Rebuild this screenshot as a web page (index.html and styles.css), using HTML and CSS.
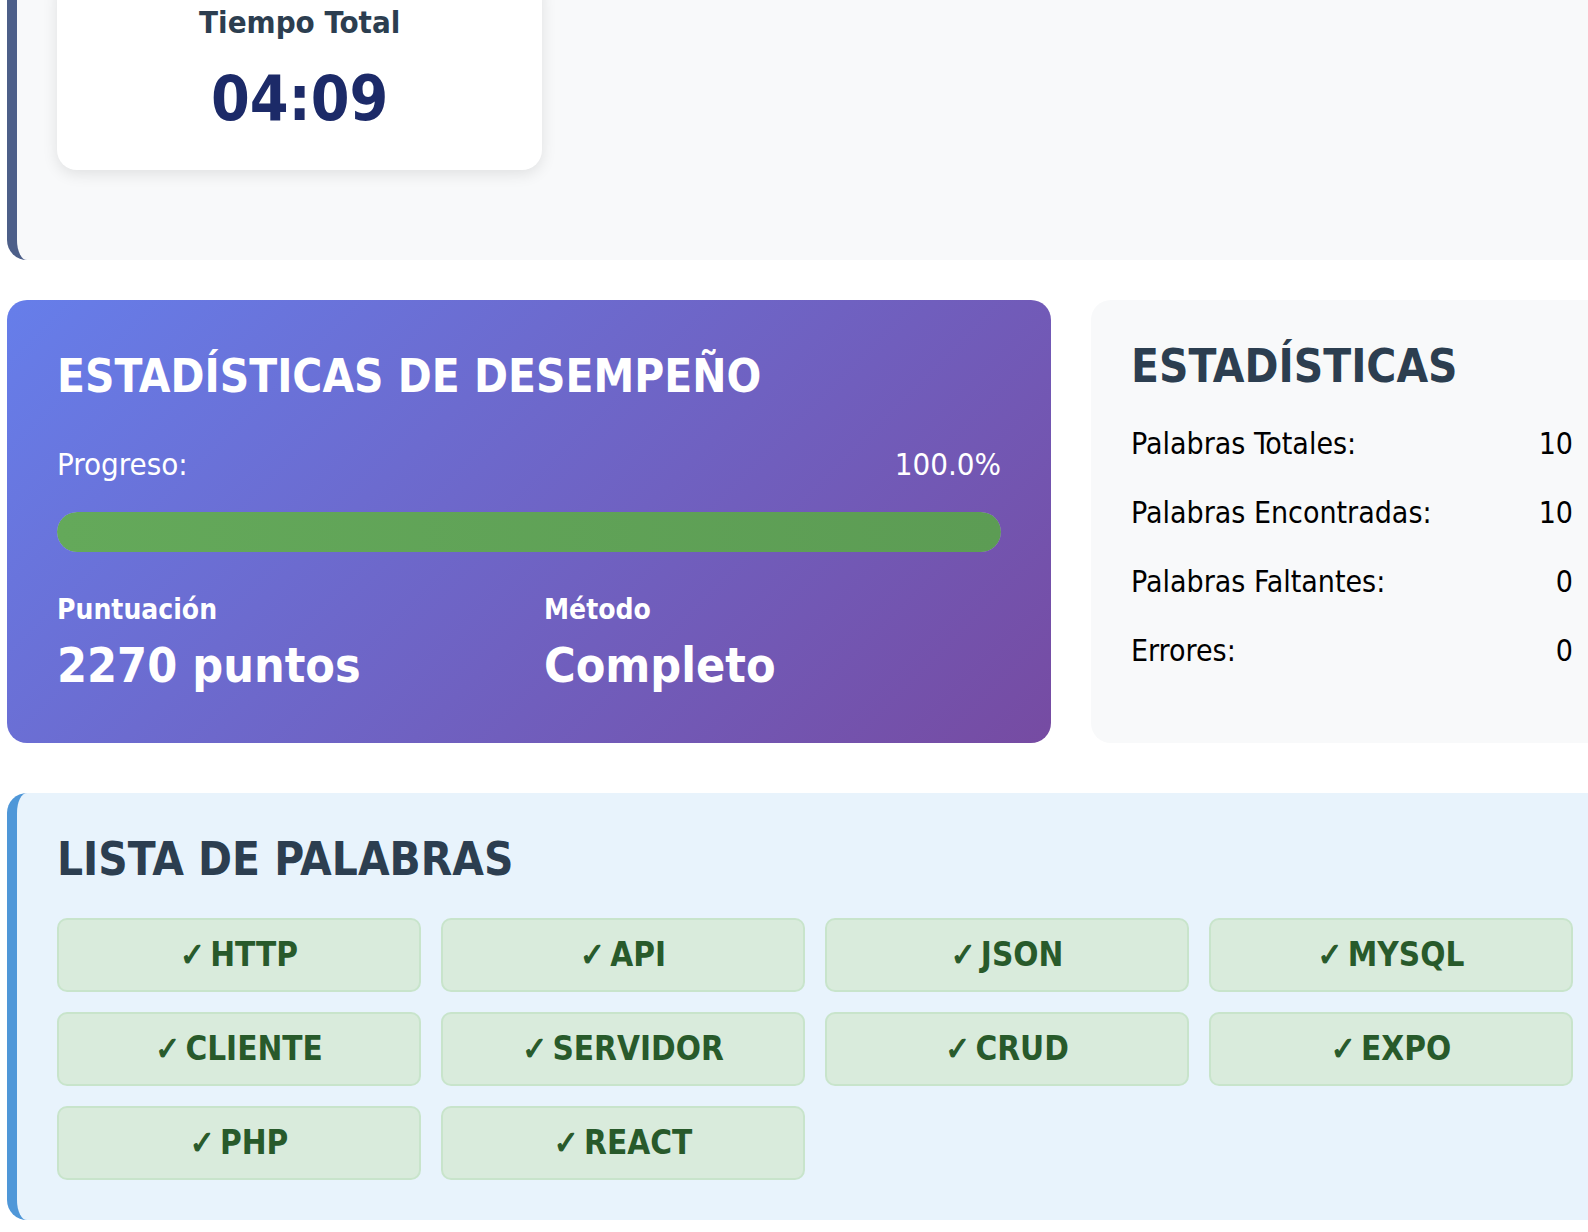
FILE: index.html
```html
<!DOCTYPE html>
<html lang="es">
<head>
    <meta charset="UTF-8">
    <title>Resultados - Sopa de Letras</title>
    <link rel="stylesheet" href="styles.css">
</head>
<body>
    <div class="page">
        <!-- Resumen de tiempo -->
        <section class="summary">
            <div class="summary-grid">
                <div class="summary-card">
                    <h3>Tiempo Total</h3>
                    <div class="summary-value">04:09</div>
                </div>
            </div>
        </section>

        <!-- Desempeño + estadisticas -->
        <div class="stats-row">
            <section class="performance">
                <h2>ESTADÍSTICAS DE DESEMPEÑO</h2>
                <div class="progress-label">
                    <span>Progreso:</span>
                    <span>100.0%</span>
                </div>
                <div class="progress-bar">
                    <div class="progress-fill" style="width: 100%"></div>
                </div>
                <div class="perf-details">
                    <div>
                        <div class="perf-title">Puntuación</div>
                        <div class="perf-value">2270 puntos</div>
                    </div>
                    <div>
                        <div class="perf-title">Método</div>
                        <div class="perf-value">Completo</div>
                    </div>
                </div>
            </section>

            <section class="stats">
                <h2>ESTADÍSTICAS</h2>
                <div class="stat-line"><span>Palabras Totales:</span><span>10</span></div>
                <div class="stat-line"><span>Palabras Encontradas:</span><span>10</span></div>
                <div class="stat-line"><span>Palabras Faltantes:</span><span>0</span></div>
                <div class="stat-line"><span>Errores:</span><span>0</span></div>
            </section>
        </div>

        <!-- Lista de palabras -->
        <section class="words">
            <h2>LISTA DE PALABRAS</h2>
            <div class="word-grid">
                <div class="word found"><span class="check">✓</span> HTTP</div>
                <div class="word found"><span class="check">✓</span> API</div>
                <div class="word found"><span class="check">✓</span> JSON</div>
                <div class="word found"><span class="check">✓</span> MYSQL</div>
                <div class="word found"><span class="check">✓</span> CLIENTE</div>
                <div class="word found"><span class="check">✓</span> SERVIDOR</div>
                <div class="word found"><span class="check">✓</span> CRUD</div>
                <div class="word found"><span class="check">✓</span> EXPO</div>
                <div class="word found"><span class="check">✓</span> PHP</div>
                <div class="word found"><span class="check">✓</span> REACT</div>
            </div>
        </section>
    </div>
</body>
</html>
```

FILE: styles.css
```css
html {
    overflow: hidden;
}

body {
    font-family: "DejaVu Sans Condensed", "DejaVu Sans", sans-serif;
    margin: 0;
    padding: 0;
    background-color: white;
}

.page {
    width: 1606px;
    margin: -66px 0 0 7px;
}

h2 {
    margin: 0;
    font-size: 45.5px;
    font-weight: bold;
}

/* Resumen */
.summary {
    background-color: #f8f9fa;
    border-left: 10px solid #4d5f89;
    border-radius: 20px;
    padding: 40px;
}

.summary-grid {
    display: grid;
    grid-template-columns: repeat(3, 1fr);
    gap: 30px;
    margin-bottom: 50px;
}

.summary-card {
    background-color: white;
    border-radius: 20px;
    box-shadow: 0 4px 15px rgba(0, 0, 0, 0.1);
    padding: 30px 20px 35px;
    text-align: center;
}

.summary-card h3 {
    margin: 0;
    font-size: 31px;
    color: #2c3e50;
}

.summary-value {
    margin-top: 22px;
    font-size: 62px;
    font-weight: bold;
    color: #1c2a68;
}

/* Fila de estadisticas */
.stats-row {
    display: grid;
    grid-template-columns: 2fr 1fr;
    gap: 40px;
    margin-top: 40px;
}

.performance {
    background: linear-gradient(135deg, #667eea 0%, #764ba2 100%);
    color: white;
    border-radius: 20px;
    padding: 50px;
}

.progress-label {
    display: flex;
    justify-content: space-between;
    margin-top: 43px;
    font-size: 31px;
}

.progress-bar {
    height: 40px;
    margin-top: 30px;
    border-radius: 20px;
    background-color: rgba(255, 255, 255, 0.3);
    overflow: hidden;
}

.progress-fill {
    height: 100%;
    border-radius: 20px;
    background: linear-gradient(90deg, #64a95a, #5c9c54);
}

.perf-details {
    display: grid;
    grid-template-columns: 1fr 1fr;
    gap: 30px;
    margin-top: 41px;
}

.perf-title {
    font-size: 28px;
    font-weight: bold;
}

.perf-value {
    margin-top: 11px;
    font-size: 48px;
    font-weight: bold;
}

.stats {
    background-color: #f8f9fa;
    border-radius: 20px;
    padding: 40px;
}

.stats h2 {
    color: #2c3e50;
    margin-bottom: 16px;
}

.stat-line {
    display: flex;
    justify-content: space-between;
    padding: 17px 0;
    font-size: 30px;
    color: black;
}

/* Lista de palabras */
.words {
    margin-top: 50px;
    background-color: #e8f3fc;
    border-left: 10px solid #4f97d8;
    border-radius: 20px;
    padding: 40px;
}

.words h2 {
    color: #2c3e50;
    margin-bottom: 32px;
}

.word-grid {
    display: grid;
    grid-template-columns: repeat(4, 1fr);
    gap: 20px;
}

.word {
    padding: 16px 10px;
    border-radius: 10px;
    text-align: center;
    font-size: 33px;
    line-height: 38px;
    font-weight: bold;
    word-spacing: -5px;
}

.word.found {
    background-color: #d9ebdc;
    border: 2px solid #c8e4cb;
    color: #285a2b;
}

.check {
    -webkit-text-stroke: 1.2px #285a2b;
}
```
